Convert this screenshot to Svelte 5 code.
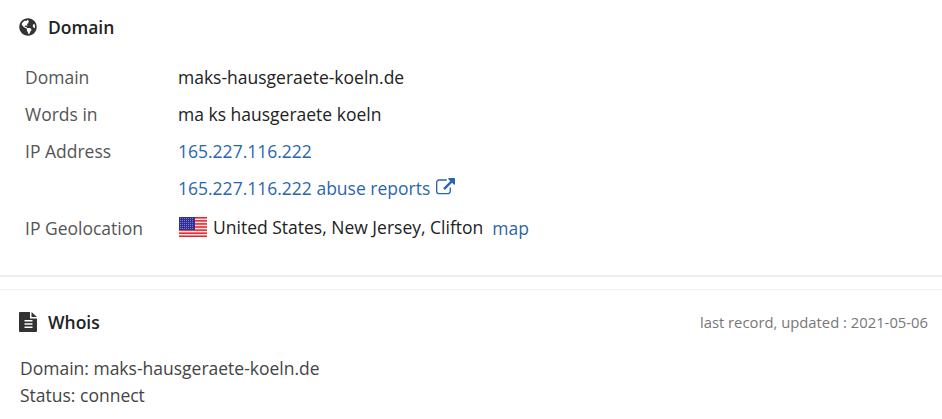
<script>
  const rows = [
    { label: 'Domain', text: 'maks-hausgeraete-koeln.de' },
    { label: 'Words in', text: 'ma ks hausgeraete koeln' },
    { label: 'IP Address', link: '165.227.116.222' }
  ];
  const stripes = [0, 1, 2, 3, 4, 5, 6];
  const dotRows = [1.5, 3.5, 5.5, 7.5, 9.5, 11.5];
  const dotCols = [1.5, 3.5, 5.5, 7.5, 9.5, 11.5, 13.5];
</script>

<div class="page">
  <section class="domain">
    <h2>
      <svg class="icon" viewBox="0 0 496 512" aria-hidden="true">
        <path d="M248 8C111.03 8 0 119.03 0 256s111.03 248 248 248 248-111.03 248-248S384.97 8 248 8zm82.29 357.6c-3.9 3.88-7.99 7.95-11.31 11.28-2.99 3-5.1 6.7-6.17 10.71-1.51 5.66-2.73 11.38-4.77 16.87l-17.39 46.85c-13.76 3-28 4.69-42.65 4.69v-27.38c1.69-12.62-7.64-36.26-22.63-51.25-6-6-9.37-14.14-9.37-22.63v-32.01c0-11.64-6.27-22.34-16.46-27.97-14.37-7.95-34.81-19.06-48.81-26.11-11.48-5.78-22.1-13.14-31.65-21.75l-.8-.72a114.792 114.792 0 0 1-18.06-20.74c-9.38-13.77-24.66-36.42-34.59-51.14 20.47-45.5 57.36-82.04 103.2-101.89l24.01 12.01C203.48 89.74 216 82.01 216 70.11v-11.3c7.99-1.29 16.12-2.11 24.45-2.42l28.3 28.3c6.25 6.25 6.25 16.38 0 22.63L264 112l-10.34 10.34c-3.12 3.12-3.12 8.19 0 11.31l4.69 4.69c3.12 3.12 3.12 8.19 0 11.31l-8 8a8.008 8.008 0 0 1-5.66 2.34h-8.99c-2.08 0-4.08.81-5.58 2.27l-9.92 9.65a8.008 8.008 0 0 0-1.58 9.31l15.59 31.19c2.66 5.32-1.21 11.58-7.15 11.58h-5.64c-1.93 0-3.79-.7-5.24-1.96l-9.28-8.06a16.017 16.017 0 0 0-15.55-3.1l-31.17 10.39a11.95 11.95 0 0 0-8.17 11.34c0 4.53 2.56 8.66 6.61 10.69l11.08 5.54c9.41 4.71 19.79 7.16 30.31 7.16s22.59 27.29 32 32h66.75c8.49 0 16.62 3.37 22.63 9.37l13.69 13.69a30.503 30.503 0 0 1 8.93 21.57 46.536 46.536 0 0 1-13.72 32.98zM417 274.25c-5.79-1.45-10.84-5-14.15-9.97l-17.98-26.97a23.97 23.97 0 0 1 0-26.62l19.59-29.38c2.32-3.47 5.5-6.29 9.24-8.15l12.98-6.49C440.2 193.59 448 223.87 448 256c0 8.67-.74 17.16-1.82 25.54L417 274.25z"/>
      </svg>
      Domain
    </h2>

    <div class="table">
      {#each rows as row}
        <div class="label">{row.label}</div>
        <div class="value">
          {#if row.link}
            <a href="#ip">{row.link}</a>
          {:else}
            {row.text}
          {/if}
        </div>
      {/each}

      <div class="label"></div>
      <div class="value">
        <a href="#abuse">165.227.116.222 abuse reports
          <svg class="ext" viewBox="0 0 1792 1792" aria-hidden="true">
            <path d="M1408 928v320q0 119-84.5 203.5t-203.5 84.5h-832q-119 0-203.5-84.5t-84.5-203.5v-832q0-119 84.5-203.5t203.5-84.5h704q14 0 23 9t9 23v64q0 14-9 23t-23 9h-704q-66 0-113 47t-47 113v832q0 66 47 113t113 47h832q66 0 113-47t47-113v-320q0-14 9-23t23-9h64q14 0 23 9t9 23zm384-864v512q0 26-19 45t-45 19-45-19l-176-176-652 652q-10 10-23 10t-23-10l-114-114q-10-10-10-23t10-23l652-652-176-176q-19-19-19-45t19-45 45-19h512q26 0 45 19t19 45z"/>
          </svg>
        </a>
      </div>

      <div class="label geo-label">IP Geolocation</div>
      <div class="value geo">
        <svg class="flag" viewBox="0 0 28 20" aria-hidden="true">
          <rect width="28" height="20" fill="#fde8e8"/>
          {#each stripes as s}
            <rect y={s * 3.08} width="28" height="1.54" fill="#e8232c"/>
          {/each}
          <rect width="16" height="13" fill="#2f2f96"/>
          {#each dotRows as y}
            {#each dotCols as x}
              <circle cx={x} cy={y} r="0.5" fill="#9a9ad8"/>
            {/each}
          {/each}
        </svg>
        <span>United States, New Jersey, Clifton</span>
        <a class="map" href="#map">map</a>
      </div>
    </div>
  </section>

  <section class="whois">
    <header>
      <h2>
        <svg class="icon doc" viewBox="0 0 18 20" aria-hidden="true">
          <path d="M0 1a1 1 0 0 1 1-1h10v6.5h7V19a1 1 0 0 1-1 1H1a1 1 0 0 1-1-1z"/>
          <path d="M12.5 0 18 5h-5.500z"/>
          <rect class="doc-line" x="5.500" y="8" width="8" height="1.500"/>
          <rect class="doc-line" x="5.500" y="11.250" width="8" height="1.500"/>
          <rect class="doc-line" x="5.500" y="14.500" width="8" height="1.500"/>
        </svg>
        Whois
      </h2>
      <span class="updated">last record, updated : 2021-05-06</span>
    </header>
    <p>Domain: maks-hausgeraete-koeln.de<br />Status: connect</p>
  </section>
</div>

<style>
  :global(body) {
    background: #fff;
    overflow: hidden;
  }

  .page {
    width: 942px;
    height: 419px;
    overflow: hidden;
    font-family: "Open Sans", sans-serif;
    font-size: 17.5px;
    color: #222;
  }

  h2 {
    display: flex;
    align-items: center;
    margin: 0;
    font-size: 17.5px;
    font-weight: 600;
    line-height: 24px;
    color: #222;
  }

  .icon {
    width: 18px;
    height: 18px;
    margin-right: 11px;
    fill: #333;
  }

  .doc {
    height: 20px;
  }

  .doc-line {
    fill: #fff;
  }

  .domain {
    height: 260px;
    padding: 15px 19px 0 19px;
    border-bottom: 2px solid #eee;
  }

  .table {
    display: grid;
    grid-template-columns: 153px 1fr;
    grid-auto-rows: 37px;
    margin: 20px 0 0 6px;
    line-height: 37px;
  }

  .label {
    color: #555;
  }

  a {
    color: #2b66ad;
    text-decoration: none;
  }

  .ext {
    width: 19px;
    height: 19px;
    margin-left: 1px;
    fill: #2b66ad;
    vertical-align: -2px;
  }

  .geo-label,
  .geo {
    margin-top: 3px;
  }

  .geo {
    display: flex;
    align-items: center;
  }

  .flag {
    width: 28px;
    height: 20px;
    margin-left: 1px;
    margin-right: 6px;
  }

  .map {
    margin-left: 9px;
    margin-top: 2px;
  }

  .whois {
    margin-top: 12px;
    border-top: 1px solid #eee;
    padding: 20px 14px 0 19px;
  }

  header {
    display: flex;
    justify-content: space-between;
    align-items: center;
  }

  .updated {
    font-size: 14.8px;
    color: #777;
  }

  p {
    margin: 21px 0 0 1px;
    line-height: 27px;
    color: #444;
  }
</style>
